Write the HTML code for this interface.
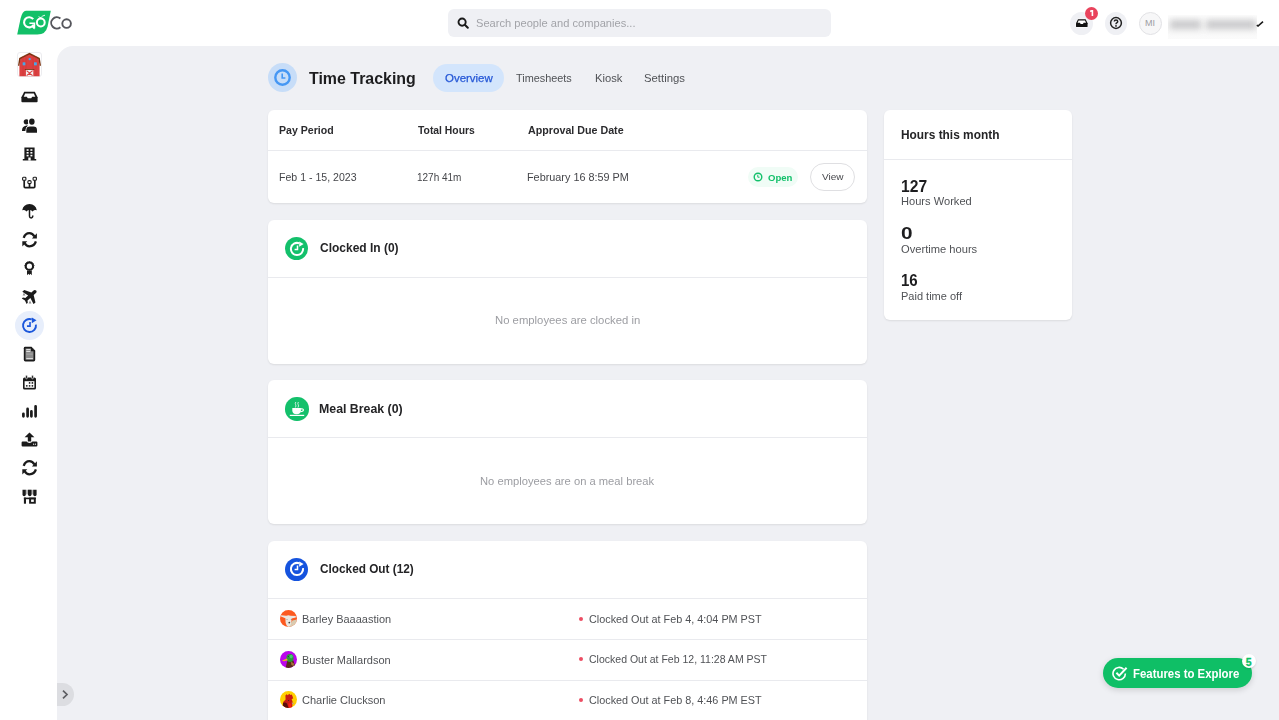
<!DOCTYPE html>
<html><head><meta charset="utf-8">
<style>
*{box-sizing:border-box;margin:0;padding:0}
html,body{width:1279px;height:720px;overflow:hidden;background:#fff;font-family:"Liberation Sans",sans-serif;color:#222}
.abs{position:absolute}
.t{position:absolute;white-space:nowrap;line-height:1;transform-origin:0 0}
#main{position:absolute;left:57px;top:46px;width:1222px;height:674px;background:#eff0f4;border-top-left-radius:16px}
.card{position:absolute;background:#fff;border-radius:6px;box-shadow:0 1px 2px rgba(0,0,0,0.09)}
.dv{position:absolute;height:1px;background:#e9eaee}
.ic{position:absolute;width:23px;height:23px;border-radius:50%}
.av{position:absolute;width:17px;height:17px;border-radius:50%;overflow:hidden}
.dot{position:absolute;width:4px;height:4px;border-radius:50%;background:#ec4d63}
</style></head><body>
<!-- Header -->
<svg class="abs" style="left:17px;top:10px" width="56" height="26" viewBox="0 0 56 26">
  <path d="M9 0.8 H33.8 L30.6 16.4 Q28.8 24.4 20.4 24.4 H0.2 L3.6 8.6 Q5.4 0.8 9 0.8Z" fill="#12c068"/>
  <path d="M16.2 9.2 A5.1 5.1 0 1 0 16.7 14.6" fill="none" stroke="#fff" stroke-width="2.1"/>
  <path d="M12.4 13.2 H17.4 V18.6" fill="none" stroke="#fff" stroke-width="1.6"/>
  <path d="M14.2 16.6 L17.4 19.6 L17.6 15.6Z" fill="#fff"/>
  <circle cx="23.8" cy="12.5" r="3.9" fill="none" stroke="#fff" stroke-width="2"/>
  <path d="M21.6 6.6 Q23 7.8 24 7.6 Q25.4 5.6 28 5.2" fill="none" stroke="#fff" stroke-width="0.9"/>
  <path d="M43.4 8.6 A5.6 5.6 0 1 0 43.4 17.2" fill="none" stroke="#55565c" stroke-width="1.9"/>
  <circle cx="49.6" cy="13.6" r="4.3" fill="none" stroke="#55565c" stroke-width="1.9"/>
</svg>
<div class="abs" style="left:448px;top:9px;width:383px;height:28px;background:#eff0f4;border-radius:6px"></div>
<svg class="abs" style="left:457px;top:17px" width="12" height="12" viewBox="0 0 12 12"><circle cx="5.1" cy="5.1" r="3.6" fill="none" stroke="#1a1a1a" stroke-width="1.9"/><path d="M7.8 7.8 L10.8 10.8" stroke="#1a1a1a" stroke-width="2" stroke-linecap="round"/></svg>

<div class="abs" style="left:1070px;top:12px;width:23px;height:23px;border-radius:50%;background:#eff0f4"></div>
<svg class="abs" style="left:1075px;top:18px" width="14" height="10" viewBox="0 0 14 10"><path d="M3 1.2 H10.6 L12.6 5.2 V8.2 Q12.6 9.1 11.7 9.1 H1.9 Q1 9.1 1 8.2 V5.2 Z" fill="#111" stroke="#fff" stroke-width="0.8" paint-order="stroke"/><path d="M3.6 2.6 H10 L11 4.8 H8.6 L8 5.9 H5.6 L5 4.8 H2.6Z" fill="#fff"/></svg>
<div class="abs" style="left:1085px;top:7px;width:13px;height:13px;border-radius:50%;background:#e9435c"></div>
<svg class="abs" style="left:1088px;top:9px" width="7" height="8" viewBox="0 0 7 8"><path d="M2.2 1.2 L4 1 H5.2 V6.9 H3.6 V2.8 L2.2 3.2Z" fill="#fff"/></svg>
<div class="abs" style="left:1105px;top:12px;width:22px;height:23px;border-radius:50%;background:#eff0f4"></div>
<svg class="abs" style="left:1109px;top:16px" width="14" height="14" viewBox="0 0 14 14"><circle cx="7" cy="7" r="5.4" fill="none" stroke="#222" stroke-width="1.5"/><path d="M5.3 5.6 Q5.3 4 7 4 Q8.7 4 8.7 5.4 Q8.7 6.3 7.7 6.8 Q7 7.2 7 8.2" fill="none" stroke="#222" stroke-width="1.5"/><circle cx="7" cy="9.9" r="0.9" fill="#222"/></svg>
<div class="abs" style="left:1139px;top:12px;width:23px;height:23px;border-radius:50%;background:#f7f7f8;border:1px solid #e2e2e5"></div>
<div class="abs" style="left:1145px;top:19px;color:#9c9ca2;font-size:9px;line-height:1">MI</div>
<div class="abs" style="left:1168px;top:15px;width:89px;height:24px;overflow:hidden;background:linear-gradient(#fdfdfd,#f7f7f7 50%,#fbfbfb)"><div class="abs" style="left:2px;top:5px;width:31px;height:9px;background:#c9c9cb;filter:blur(3px)"></div><div class="abs" style="left:38px;top:5px;width:50px;height:9px;background:#c9c9cb;filter:blur(3px)"></div></div>
<svg class="abs" style="left:1256px;top:20px" width="8" height="7" viewBox="0 0 8 7"><path d="M0.8 5.2 L2 6 L7 1.6" fill="none" stroke="#1a1a1a" stroke-width="1.6"/></svg>

<div id="main"></div>
<!-- Sidebar -->
<div class="abs" style="left:17px;top:52px;width:25px;height:25px;border-radius:3px;background:#fff;border:1px solid #ececef"></div>
<svg class="abs" style="left:17px;top:52px" width="25" height="25" viewBox="0 0 25 25">
      <path d="M2.4 13.6 L3.4 6.6 L12.5 1.8 L21.6 6.6 L22.6 13.6 V24.2 H2.4Z" fill="#dc4040"/>
      <path d="M1 13.8 L2.2 6 L12.5 0.8 L22.8 6 L24 13.8 L22.7 13.8 L21.4 7 L12.5 2.4 L3.6 7 L2.3 13.8Z" fill="#7a3410"/>
      <path d="M6 4 V24 M9 2.8 V24 M16 2.8 V24 M19 4 V24" stroke="#c73535" stroke-width="0.5"/>
      <rect x="5.2" y="9.9" width="3.6" height="3.9" fill="#e83a2a"/>
      <rect x="5.6" y="10.3" width="2.8" height="3.1" fill="#4aa6e8"/>
      <rect x="16.6" y="9.9" width="3.6" height="3.9" fill="#e83a2a"/>
      <rect x="17" y="10.3" width="2.8" height="3.1" fill="#4aa6e8"/>
      <circle cx="12.7" cy="7.1" r="1.2" fill="#4aa6e8"/>
      <rect x="7.8" y="17" width="9.6" height="0.9" fill="#7a3410"/>
      <rect x="8.9" y="17.9" width="7.4" height="6.3" fill="#f2f2f2"/>
      <path d="M9.6 18.6 L12.6 21.2 M15.6 18.6 L12.6 21.2 M9.6 23.6 L12.6 21.2 M15.6 23.6 L12.6 21.2" stroke="#dc4040" stroke-width="1.1"/>
    </svg>
<svg class="abs" style="left:21px;top:91px" width="17" height="12" viewBox="0 0 17 12">
      <path d="M3.2 0.8 H13.8 L16.6 6.2 V10.2 Q16.6 11.2 15.6 11.2 H1.4 Q0.4 11.2 0.4 10.2 V6.2Z" fill="#1b1b1b"/>
      <path d="M4.2 2.6 H12.8 L14.3 5.8 H11.2 L10.2 7.3 H6.8 L5.8 5.8 H2.7Z" fill="#fff"/>
    </svg>
<svg class="abs" style="left:21px;top:118px" width="17" height="15" viewBox="0 0 17 15">
      <circle cx="5.3" cy="3.8" r="2.6" fill="#1b1b1b"/>
      <ellipse cx="10.85" cy="3.6" rx="3.9" ry="4.3" fill="#fff"/>
      <ellipse cx="10.85" cy="3.6" rx="2.75" ry="3.2" fill="#1b1b1b"/>
      <path d="M1 12.9 Q0.8 8.6 5.4 7.6 H7 Q4.6 9.6 4.6 12.9 Z" fill="#1b1b1b"/>
      <path d="M5.3 14.7 V12 Q5.3 8.6 9 8.6 H12.3 Q16 8.6 16 12 V14.7Z" fill="#1b1b1b" stroke="#fff" stroke-width="1.3" paint-order="stroke"/>
    </svg>
<svg class="abs" style="left:22px;top:147px" width="15" height="14" viewBox="0 0 15 14">
      <path d="M2.4 0.6 H12.6 V12 H14.2 V13.6 H0.8 V12 H2.4Z" fill="#1b1b1b"/>
      <rect x="4.6" y="2.2" width="2" height="1.6" fill="#fff"/><rect x="8.4" y="2.2" width="2" height="1.6" fill="#fff"/>
      <rect x="4.6" y="5" width="2" height="1.6" fill="#fff"/><rect x="8.4" y="5" width="2" height="1.6" fill="#fff"/>
      <rect x="4.6" y="7.8" width="2" height="1.6" fill="#fff"/><rect x="8.4" y="7.8" width="2" height="1.6" fill="#fff"/>
      <rect x="6.3" y="10.5" width="2.4" height="3.1" fill="#fff"/>
    </svg>
<svg class="abs" style="left:22px;top:176px" width="15" height="13" viewBox="0 0 15 13">
      <path d="M2.2 4 V10.6 Q2.2 11.6 3.2 11.6 H11.8 Q12.8 11.6 12.8 10.6 V4 M7.5 7.4 V11.6" fill="none" stroke="#1b1b1b" stroke-width="1.7"/>
      <rect x="0.6" y="1.3" width="3.3" height="3" rx="0.8" fill="#fff" stroke="#1b1b1b" stroke-width="1.1"/>
      <rect x="11.1" y="1.3" width="3.3" height="3" rx="0.8" fill="#fff" stroke="#1b1b1b" stroke-width="1.1"/>
      <rect x="5.85" y="4.6" width="3.3" height="3" rx="1.2" fill="#fff" stroke="#1b1b1b" stroke-width="1.1"/>
    </svg>
<svg class="abs" style="left:21px;top:203px" width="17" height="17" viewBox="0 0 17 17">
      <path d="M1.2 7.3 Q2.4 1.2 8.5 1 Q14.6 1.2 15.8 7.3 Q13.6 6.2 11.6 8.4 Q8.5 5.6 5.4 8.4 Q3.4 6.2 1.2 7.3Z" fill="#1b1b1b"/>
      <path d="M8.5 6.6 V13.2 Q8.5 14.9 10.2 14.9 Q11.8 14.9 11.8 12.6" fill="none" stroke="#1b1b1b" stroke-width="1.5"/>
    </svg>
<svg class="abs" style="left:22px;top:232px" width="15" height="16" viewBox="0 0 15 16">
      <path d="M1.7 5.9 Q3.2 1.2 7.4 1.2 Q10.6 1.2 12.4 4.4" fill="none" stroke="#1b1b1b" stroke-width="2.3"/>
      <path d="M14.9 1.2 V6.4 H9.9Z" fill="#1b1b1b"/>
      <path d="M13.9 9.4 Q12.5 14.3 7.4 14.3 Q4.4 14.3 2.6 11.2" fill="none" stroke="#1b1b1b" stroke-width="2.3"/>
      <path d="M0.3 9.2 H5.3 L0.3 14.6Z" fill="#1b1b1b"/>
    </svg>
<svg class="abs" style="left:24px;top:261px" width="11" height="15" viewBox="0 0 11 15">
      <circle cx="5.4" cy="5.2" r="3.6" fill="none" stroke="#1b1b1b" stroke-width="2"/>
      <path d="M5.4 0.6 L6.4 1.2 L7.6 1 L8.2 2 L9.3 2.5 L9.4 3.6 L10 4.6 L9.5 5.6 L9.6 6.8 L8.6 7.4 L8 8.4 L6.8 8.5 L5.4 9.2 L4 8.5 L2.8 8.4 L2.2 7.4 L1.2 6.8 L1.3 5.6 L0.8 4.6 L1.4 3.6 L1.5 2.5 L2.6 2 L3.2 1 L4.4 1.2Z" fill="none" stroke="#1b1b1b" stroke-width="1"/>
      <path d="M3 9.2 L3 14.2 L4.4 12.8 L5.4 14 L6.4 12.8 L7.8 14.2 L7.8 9.2 Q5.4 10.2 3 9.2Z" fill="#1b1b1b"/>
    </svg>
<svg class="abs" style="left:21px;top:286px" width="18" height="18" viewBox="0 0 18 18">
      <path transform="translate(9 10) rotate(-42)" d="M8.2 0 Q8.2 -1.8 6 -1.8 L3.4 -1.7 L-0.2 -8.4 L-2.8 -8.4 L-1 -1.7 L-4.8 -1.6 L-6.2 -3.6 L-7.8 -3.6 L-6.8 0 L-7.8 3.6 L-6.2 3.6 L-4.8 1.6 L-1 1.7 L-2.8 8.4 L-0.2 8.4 L3.4 1.7 L6 1.8 Q8.2 1.8 8.2 0Z" fill="#1b1b1b"/>
      <path d="M1.6 9.6 L3 6.6 L4.4 9.6Z" fill="#8a8a8a"/>
      <path d="M7.6 17.6 L9 14.6 L10.4 17.6Z" fill="#8a8a8a"/>
    </svg>
<div class="abs" style="left:15px;top:311px;width:29px;height:29px;border-radius:50%;background:#e7eefb"></div>
<svg class="abs" style="left:21.0px;top:317.0px" width="17" height="17" viewBox="0 0 16 16"><path d="M14.04 7.15 A6.1 6.1 0 1 1 10.09 2.27" fill="none" stroke="#1a56db" stroke-width="1.8"/><path d="M10.2 0.4 L14.6 3.0 L10.2 5.8Z" fill="#1a56db"/><path d="M8.5 4.6 V8.6 H5.6" fill="none" stroke="#1a56db" stroke-width="1.5"/></svg>
<svg class="abs" style="left:23px;top:346px" width="13" height="16" viewBox="0 0 13 16">
      <path d="M2.2 0.8 H8.4 L12.2 4.6 V13.8 Q12.2 15.4 10.6 15.4 H2.4 Q0.8 15.4 0.8 13.8 V2.2 Q0.8 0.8 2.2 0.8Z" fill="#1b1b1b"/>
      <rect x="2.5" y="2.5" width="8" height="11.2" fill="#8c8c8c"/>
      <path d="M8 0.8 V5.2 H12.2Z" fill="#1b1b1b"/>
      <rect x="3.3" y="3.1" width="4" height="1" fill="#e8e8e8"/>
      <rect x="3.3" y="5.1" width="4" height="0.9" fill="#e8e8e8"/>
      <rect x="3.3" y="7.6" width="6.4" height="1" fill="#a8a8a8"/>
      <rect x="3.3" y="12.1" width="6.6" height="1" fill="#e0e0e0"/>
    </svg>
<svg class="abs" style="left:22px;top:375px" width="15" height="15" viewBox="0 0 15 15">
      <rect x="1" y="2.4" width="13" height="12.2" rx="1.6" fill="#1b1b1b"/>
      <rect x="2.6" y="6.2" width="9.8" height="6.6" fill="#fff"/>
      <rect x="3.6" y="0.2" width="1.8" height="3.6" rx="0.9" fill="#1b1b1b" stroke="#fff" stroke-width="0.6"/>
      <rect x="9.6" y="0.2" width="1.8" height="3.6" rx="0.9" fill="#1b1b1b" stroke="#fff" stroke-width="0.6"/>
      <circle cx="7.6" cy="7.9" r="0.9" fill="#1b1b1b"/><circle cx="10.4" cy="7.9" r="0.9" fill="#1b1b1b"/>
      <circle cx="4.8" cy="10.8" r="0.9" fill="#1b1b1b"/><circle cx="7.6" cy="10.8" r="0.9" fill="#1b1b1b"/><circle cx="10.4" cy="10.8" r="0.9" fill="#1b1b1b"/>
    </svg>
<svg class="abs" style="left:22px;top:404px" width="16" height="14" viewBox="0 0 16 14">
      <path d="M1.4 9.8 V12.3 M5.6 4.9 V12.3 M9.4 7.4 V12.3 M13.6 2.3 V12.3" stroke="#1b1b1b" stroke-width="2.7" stroke-linecap="round"/>
    </svg>
<svg class="abs" style="left:21px;top:432px" width="17" height="15" viewBox="0 0 17 15">
      <path d="M8.5 0.4 L13.4 5.2 H10.2 V9.6 H6.8 V5.2 H3.6Z" fill="#1b1b1b"/>
      <path d="M0.6 10.6 Q0.6 9.6 1.6 9.6 H5.6 Q6.4 11 8.5 11 Q10.6 11 11.4 9.6 H15.4 Q16.4 9.6 16.4 10.6 V13.6 Q16.4 14.6 15.4 14.6 H1.6 Q0.6 14.6 0.6 13.6Z" fill="#1b1b1b"/>
      <circle cx="12.6" cy="12.2" r="0.6" fill="#fff"/><circle cx="14.4" cy="12.2" r="0.6" fill="#fff"/>
    </svg>
<svg class="abs" style="left:22px;top:460px" width="15" height="16" viewBox="0 0 15 16">
      <path d="M1.7 5.9 Q3.2 1.2 7.4 1.2 Q10.6 1.2 12.4 4.4" fill="none" stroke="#1b1b1b" stroke-width="2.3"/>
      <path d="M14.9 1.2 V6.4 H9.9Z" fill="#1b1b1b"/>
      <path d="M13.9 9.4 Q12.5 14.3 7.4 14.3 Q4.4 14.3 2.6 11.2" fill="none" stroke="#1b1b1b" stroke-width="2.3"/>
      <path d="M0.3 9.2 H5.3 L0.3 14.6Z" fill="#1b1b1b"/>
    </svg>
<svg class="abs" style="left:22px;top:489px" width="15" height="16" viewBox="0 0 15 16">
      <rect x="3.6" y="0.8" width="7.8" height="4.6" fill="#b4b4b4"/>
      <path d="M0.5 0.8 H3.8 V5.6 Q3.8 7.2 2.15 7.2 Q0.5 7.2 0.5 5.6Z" fill="#1b1b1b"/>
      <path d="M6 0.8 H9.5 V5.6 Q9.5 7.2 7.75 7.2 Q6 7.2 6 5.6Z" fill="#1b1b1b"/>
      <path d="M11.2 0.8 H14.6 V5.6 Q14.6 7.2 12.9 7.2 Q11.2 7.2 11.2 5.6Z" fill="#1b1b1b"/>
      <rect x="1.9" y="8.6" width="11.9" height="1.6" fill="#1b1b1b"/>
      <rect x="1.9" y="8.6" width="2.1" height="6.1" fill="#1b1b1b"/>
      <rect x="7.1" y="8.6" width="6.7" height="6.1" fill="#1b1b1b"/>
      <rect x="9.1" y="10.5" width="2.7" height="2.4" fill="#fff"/>
    </svg>
<div class="abs" style="left:57px;top:683px;width:17px;height:23px;border-radius:0 12px 12px 0;background:#dcdde1"></div>
<svg class="abs" style="left:61px;top:689px" width="8" height="11" viewBox="0 0 8 11"><path d="M2 1.6 L6 5.5 L2 9.4" fill="none" stroke="#5d5e62" stroke-width="1.7"/></svg>


<!-- Title -->
<div class="abs" style="left:268px;top:63px;width:29px;height:29px;border-radius:50%;background:#c7ddf8"></div>
<svg class="abs" style="left:273px;top:68px" width="19" height="19" viewBox="0 0 19 19"><circle cx="9.5" cy="9.5" r="7.2" fill="none" stroke="#4597f4" stroke-width="2.4"/><path d="M9.2 5.6 V10 H12.4" fill="none" stroke="#4597f4" stroke-width="1.6"/></svg>
<div class="abs" style="left:433px;top:64px;width:71px;height:28px;border-radius:14px;background:#d3e5fc"></div>

<!-- Pay card -->
<div class="card" style="left:268px;top:110px;width:599px;height:93px"></div>
<div class="dv" style="left:268px;top:150px;width:599px"></div>
<div class="abs" style="left:748px;top:167px;width:50px;height:20px;border-radius:10px;background:#f0fcf6"></div>
<svg class="abs" style="left:753px;top:172px" width="10" height="10" viewBox="0 0 10 10"><circle cx="5" cy="5" r="3.8" fill="none" stroke="#13c06b" stroke-width="1.4"/><path d="M4.8 2.8 V5.2 H6.6" fill="none" stroke="#13c06b" stroke-width="1"/></svg>
<div class="abs" style="left:810px;top:163px;width:45px;height:28px;border-radius:14px;border:1px solid #dfdfe2;background:#fff"></div>

<!-- Clocked in card -->
<div class="card" style="left:268px;top:220px;width:599px;height:144px"></div>
<div class="dv" style="left:268px;top:277px;width:599px"></div>
<div class="ic" style="left:285.3px;top:236.9px;width:23.2px;height:23.2px;background:#13c06b"></div>
<svg class="abs" style="left:289px;top:240.6px" width="16" height="16" viewBox="0 0 16 16"><path d="M14.04 7.15 A6.1 6.1 0 1 1 10.09 2.27" fill="none" stroke="#fff" stroke-width="2.0"/><path d="M10.2 0.4 L14.6 3.0 L10.2 5.8Z" fill="#fff"/><path d="M8.5 4.6 V8.6 H5.6" fill="none" stroke="#fff" stroke-width="1.5"/></svg>

<!-- Meal break card -->
<div class="card" style="left:268px;top:380px;width:599px;height:144px"></div>
<div class="dv" style="left:268px;top:437px;width:599px"></div>
<div class="ic" style="left:285.3px;top:397.3px;width:23.3px;height:23.3px;background:#13c06b"></div>
<svg class="abs" style="left:288px;top:400px" width="17" height="17" viewBox="0 0 17 17"><path d="M4.3 8 H12.9 V10.6 Q12.9 14.3 8.6 14.3 Q4.3 14.3 4.3 10.6Z" fill="#fff"/><path d="M12.6 8.9 Q15.4 8.6 15.4 9.9 Q15.4 11.4 12.4 11.8" fill="none" stroke="#fff" stroke-width="1.1"/><rect x="1.8" y="14.8" width="14.4" height="1.2" fill="#fff"/><path d="M7.8 2 Q6.8 3.4 7.6 4.6 Q8.4 5.8 7.4 7.5 M10.4 2 Q9.4 3.4 10.2 4.6 Q11 5.8 10 7.5" fill="none" stroke="#fff" stroke-width="0.9" opacity="0.85"/></svg>

<!-- Clocked out card -->
<div class="card" style="left:268px;top:541px;width:599px;height:190px"></div>
<div class="dv" style="left:268px;top:598px;width:599px"></div>
<div class="dv" style="left:268px;top:639px;width:599px"></div>
<div class="dv" style="left:268px;top:680px;width:599px"></div>
<div class="ic" style="left:285.3px;top:557.9px;width:23.2px;height:23.2px;background:#1553de"></div>
<svg class="abs" style="left:289px;top:561.4px" width="16" height="16" viewBox="0 0 16 16"><path d="M14.04 7.15 A6.1 6.1 0 1 1 10.09 2.27" fill="none" stroke="#fff" stroke-width="2.0"/><path d="M10.2 0.4 L14.6 3.0 L10.2 5.8Z" fill="#fff"/><path d="M8.5 4.6 V8.6 H5.6" fill="none" stroke="#fff" stroke-width="1.5"/></svg>

<div class="av" style="left:280px;top:610px;background:#fc5a20"><svg width="17" height="17" viewBox="0 0 17 17"><path d="M9 17 H17 V9.6 L12.4 10.6Z" fill="#d9cbb0"/><path d="M1 5.3 L6.2 5.8 Q8.4 4.8 10.6 5.8 L15.8 6.1 L15.8 7.6 L11.6 8.4 L11.4 12.6 Q10.6 16.6 8.6 17 Q6.4 16.6 5.6 12.6 L5.4 8.2 L1 6.5Z" fill="#ebe7e0"/><circle cx="9.3" cy="12.6" r="0.9" fill="#444"/><circle cx="7" cy="9.5" r="0.45" fill="#555"/><circle cx="11.2" cy="9.5" r="0.45" fill="#555"/></svg></div>
<div class="av" style="left:280px;top:650.5px;background:#bb06ec"><svg width="17" height="17" viewBox="0 0 17 17"><path d="M7.4 9.2 L13.4 9.6 L15 14.6 L11.4 17 H5.6Z" fill="#5a2c1a"/><path d="M10.8 10.6 L14 12.4 L13.8 15 L11.4 14Z" fill="#a4703a"/><ellipse cx="10" cy="7" rx="3.6" ry="3.9" fill="#2b9a3c"/><ellipse cx="11.2" cy="5.6" rx="1.6" ry="1.8" fill="#40d070"/><path d="M1.8 9.8 L6.8 7.4 L7.8 9.2 L4.2 10.2Z" fill="#f0b020"/><circle cx="8.4" cy="5.6" r="0.5" fill="#222"/></svg></div>
<div class="av" style="left:280px;top:690.8px;background:#ffcf00"><svg width="17" height="17" viewBox="0 0 17 17"><path d="M5.4 4.6 L6.6 3.2 L7.8 4.2 L9.2 2.8 L10.4 4 L11.8 3.6 L12.6 5.6 L13.2 7.6 L11.6 8 L12.6 10.8 L12.2 17 H4.6 L2.8 14.8 L3.2 11 L5.6 8.6Z" fill="#c81c14"/><path d="M3 12 Q5 10.6 7 12.4 L8.6 17 H4.6 L2.8 14.8Z" fill="#5a0e0a"/><path d="M8.4 12.6 Q10.4 11.8 11.4 13.4 L10.8 16.6 Q9 17 8.6 15.4Z" fill="#ff1a10"/><path d="M11.6 11.4 L14.6 12.2 L12.2 13.4Z" fill="#c8a070"/><circle cx="8.6" cy="9.6" r="0.5" fill="#222"/></svg></div>
<div class="dot" style="left:579.2px;top:616.7px"></div>
<div class="dot" style="left:579.2px;top:657.2px"></div>
<div class="dot" style="left:579.2px;top:697.5px"></div>

<!-- Right card -->
<div class="card" style="left:884px;top:110px;width:188px;height:210px"></div>
<div class="dv" style="left:884px;top:159px;width:188px"></div>

<!-- Features button -->
<div class="abs" style="left:1103px;top:658px;width:149px;height:30px;border-radius:15px;background:#0fbf66;box-shadow:0 2px 6px rgba(0,0,0,0.15)"></div>
<svg class="abs" style="left:1112px;top:666px" width="17" height="15" viewBox="0 0 17 15"><path d="M11.6 3.2 A6.2 6.2 0 1 0 13.4 7.4" fill="none" stroke="#fff" stroke-width="1.6"/><path d="M4.4 6.8 L7.2 9.6 L14.6 1.8" fill="none" stroke="#fff" stroke-width="2"/></svg>
<div class="abs" style="left:1242px;top:654px;width:14px;height:14px;border-radius:50%;background:#fff;box-shadow:0 1px 2px rgba(0,0,0,0.12)"></div>
<div class="abs" style="left:1245.8px;top:656.6px;color:#0fbf66;font-size:10.5px;font-weight:bold;line-height:1;-webkit-text-stroke:0.3px #0fbf66">5</div>

<div class="t" style="left:475.73px;top:18.00px;font-size:11.5px;font-weight:normal;color:#a2a3a8;transform:scaleX(0.9669);">Search people and companies...</div>
<div class="t" style="left:309.40px;top:70.60px;font-size:16.9px;font-weight:bold;color:#1d1d1f;transform:scaleX(0.9429);">Time Tracking</div>
<div class="t" style="left:444.90px;top:73.20px;font-size:11.5px;font-weight:normal;color:#2557d6;transform:scaleX(0.9958);-webkit-text-stroke:0.25px #2557d6;">Overview</div>
<div class="t" style="left:516.40px;top:73.20px;font-size:11.5px;font-weight:normal;color:#505256;transform:scaleX(0.9458);">Timesheets</div>
<div class="t" style="left:594.73px;top:73.20px;font-size:11.5px;font-weight:normal;color:#505256;transform:scaleX(0.9741);">Kiosk</div>
<div class="t" style="left:644.01px;top:73.20px;font-size:11.5px;font-weight:normal;color:#505256;transform:scaleX(0.9850);">Settings</div>
<div class="t" style="left:278.78px;top:125.20px;font-size:11.5px;font-weight:bold;color:#2b2b2e;transform:scaleX(0.9190);">Pay Period</div>
<div class="t" style="left:417.80px;top:125.20px;font-size:11.5px;font-weight:bold;color:#2b2b2e;transform:scaleX(0.9000);">Total Hours</div>
<div class="t" style="left:528.10px;top:125.20px;font-size:11.5px;font-weight:bold;color:#2b2b2e;transform:scaleX(0.9291);">Approval Due Date</div>
<div class="t" style="left:279.20px;top:171.60px;font-size:11.8px;font-weight:normal;color:#45464a;transform:scaleX(0.8965);">Feb 1 - 15, 2023</div>
<div class="t" style="left:416.95px;top:171.60px;font-size:11.8px;font-weight:normal;color:#45464a;transform:scaleX(0.8471);">127h 41m</div>
<div class="t" style="left:527.18px;top:171.60px;font-size:11.8px;font-weight:normal;color:#45464a;transform:scaleX(0.9193);">February 16 8:59 PM</div>
<div class="t" style="left:767.90px;top:172.50px;font-size:9.8px;font-weight:bold;color:#13c06b;transform:scaleX(0.9760);">Open</div>
<div class="t" style="left:822.10px;top:172.30px;font-size:9.5px;font-weight:normal;color:#48494d;transform:scaleX(1.0550);">View</div>
<div class="t" style="left:320.10px;top:242.30px;font-size:12.3px;font-weight:bold;color:#242426;transform:scaleX(0.9750);">Clocked In (0)</div>
<div class="t" style="left:494.82px;top:315.40px;font-size:11.5px;font-weight:normal;color:#9c9da2;transform:scaleX(0.9836);">No employees are clocked in</div>
<div class="t" style="left:319.10px;top:402.60px;font-size:12.3px;font-weight:bold;color:#242426;transform:scaleX(1.0037);">Meal Break (0)</div>
<div class="t" style="left:479.93px;top:476.20px;font-size:11.5px;font-weight:normal;color:#9c9da2;transform:scaleX(0.9730);">No employees are on a meal break</div>
<div class="t" style="left:320.10px;top:563.20px;font-size:12.3px;font-weight:bold;color:#242426;transform:scaleX(0.9598);">Clocked Out (12)</div>
<div class="t" style="left:302.07px;top:614.30px;font-size:11.8px;font-weight:normal;color:#505256;transform:scaleX(0.9309);">Barley Baaaastion</div>
<div class="t" style="left:302.07px;top:654.50px;font-size:11.8px;font-weight:normal;color:#505256;transform:scaleX(0.9330);">Buster Mallardson</div>
<div class="t" style="left:302.06px;top:694.80px;font-size:11.8px;font-weight:normal;color:#505256;transform:scaleX(0.9364);">Charlie Cluckson</div>
<div class="t" style="left:589.28px;top:614.00px;font-size:11.8px;font-weight:normal;color:#505256;transform:scaleX(0.9176);">Clocked Out at Feb 4, 4:04 PM PST</div>
<div class="t" style="left:589.31px;top:654.30px;font-size:11.8px;font-weight:normal;color:#505256;transform:scaleX(0.8910);">Clocked Out at Feb 12, 11:28 AM PST</div>
<div class="t" style="left:589.28px;top:694.60px;font-size:11.8px;font-weight:normal;color:#505256;transform:scaleX(0.9176);">Clocked Out at Feb 8, 4:46 PM EST</div>
<div class="t" style="left:901.15px;top:128.50px;font-size:12.5px;font-weight:bold;color:#242426;transform:scaleX(0.9510);">Hours this month</div>
<div class="t" style="left:901.00px;top:178.60px;font-size:15.6px;font-weight:bold;color:#1d1d1f;transform:scaleX(1.0042);">127</div>
<div class="t" style="left:900.83px;top:196.00px;font-size:11.5px;font-weight:normal;color:#505256;transform:scaleX(0.9653);">Hours Worked</div>
<div class="t" style="left:900.60px;top:226.00px;font-size:16.0px;font-weight:bold;color:#1d1d1f;transform:scaleX(1.3000);">0</div>
<div class="t" style="left:901.10px;top:243.70px;font-size:11.5px;font-weight:normal;color:#505256;transform:scaleX(0.9692);">Overtime hours</div>
<div class="t" style="left:901.04px;top:273.30px;font-size:15.6px;font-weight:bold;color:#1d1d1f;transform:scaleX(0.9625);">16</div>
<div class="t" style="left:900.84px;top:291.00px;font-size:11.5px;font-weight:normal;color:#505256;transform:scaleX(0.9571);">Paid time off</div>
<div class="t" style="left:1132.97px;top:667.70px;font-size:12.3px;font-weight:bold;color:#ffffff;transform:scaleX(0.9263);">Features to Explore</div>
</body></html>
